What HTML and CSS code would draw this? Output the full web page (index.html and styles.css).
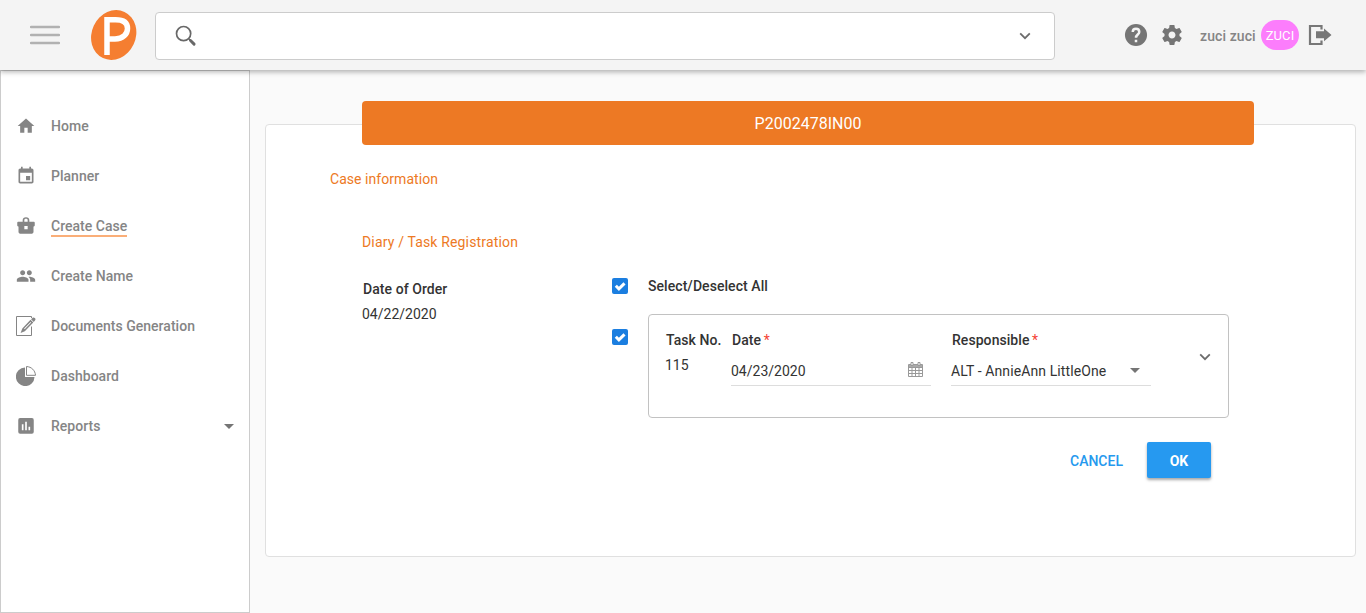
FILE: index.html
```html
<!DOCTYPE html>
<html lang="en">
<head>
<meta charset="utf-8">
<title>Diary / Task Registration</title>
<link rel="stylesheet" href="styles.css">
</head>
<body>
<header class="topbar">
  <svg class="menu" width="30" height="20" viewBox="0 0 30 20"><path d="M1 2h28M1 10h28M1 18h28" stroke="#b1b1b1" stroke-width="2.400" stroke-linecap="round"/></svg>
  <svg class="logo" width="48" height="52" viewBox="0 0 48 52"><ellipse cx="23.700" cy="26" rx="22" ry="25.500" transform="rotate(25 23.700 26)" fill="#f57e31"/><path d="M17 46V10.800h8.500C34 10.800 37.500 14 37.500 19.500S33 30 25 30h-8" fill="none" stroke="#fff" stroke-width="5.500"/></svg>
  <div class="search">
    <svg width="22" height="22" viewBox="0 0 22 22" fill="none" stroke="#686868"><circle cx="8.600" cy="8.600" r="7.100" stroke-width="1.700"/><path d="M14 14l1.500 1.500" stroke-width="1.700"/><path d="M15.500 15.500l3.600 3.600" stroke-width="2.900" stroke-linecap="round"/></svg>
    <svg width="12" height="8" viewBox="0 0 12 8" fill="none" stroke="#6c6c6c" stroke-width="1.800"><path d="M1.200 1.400L6 6.200l4.800-4.800"/></svg>
  </div>
  <div class="tools">
    <svg class="help" width="26" height="26" viewBox="0 0 24 24"><circle cx="12" cy="12" r="10.200" fill="#757575"/><path d="M9 9.200c0-1.800 1.300-3 3-3s3 1.200 3 3c0 2.300-3 2.500-3 5.300M12 16.300v2.300" fill="none" stroke="#f4f4f4" stroke-width="2.300"/></svg>
    <svg class="gear" width="24" height="24" viewBox="0 0 24 24" fill="#757575"><path d="M19.430 12.980c.04-.32.070-.64.070-.98s-.03-.66-.07-.98l2.110-1.650c.19-.15.240-.42.120-.64l-2-3.460c-.12-.22-.39-.3-.61-.22l-2.490 1c-.52-.4-1.080-.73-1.690-.98l-.38-2.650C14.460 2.180 14.250 2 14 2h-4c-.25 0-.46.180-.49.420l-.38 2.650c-.61.250-1.170.59-1.690.98l-2.490-1c-.23-.09-.49 0-.61.220l-2 3.460c-.13.220-.07.490.12.640l2.110 1.650c-.04.320-.07.650-.07.980s.03.660.07.980l-2.110 1.650c-.19.150-.24.420-.12.640l2 3.460c.12.220.39.300.61.220l2.490-1c.52.400 1.080.730 1.690.980l.38 2.650c.03.240.24.420.49.420h4c.25 0 .46-.18.490-.42l.38-2.650c.61-.25 1.170-.59 1.690-.98l2.490 1c.23.090.49 0 .61-.22l2-3.460c.12-.22.070-.49-.12-.64l-2.110-1.650zM12 15.500c-1.930 0-3.500-1.570-3.500-3.500s1.570-3.500 3.500-3.500 3.500 1.570 3.500 3.500-1.570 3.500-3.500 3.500z"/></svg>
    <span class="username">zuci zuci</span>
    <span class="avatar">ZUCI</span>
    <svg class="logout" width="24" height="22" viewBox="0 0 24 22"><path d="M13.500 5.500V2H2v18h11.500v-3.500" fill="none" stroke="#777" stroke-width="2.200"/><path d="M8 7.200h8V4.500l7.500 6.400L16 17.200v-3H8z" fill="#777"/></svg>
  </div>
</header>
<div class="page">
  <nav class="sidebar">
    <a class="item"><svg width="20" height="20" viewBox="0 0 24 24"><path d="M10 20v-6h4v6h5v-8h3L12 3 2 12h3v8z"/></svg><span>Home</span></a>
    <a class="item"><svg width="20" height="20" viewBox="0 0 24 24"><path d="M17 12h-5v5h5v-5zM16 1v2H8V1H6v2H5c-1.110 0-1.990.9-1.990 2L3 19c0 1.100.89 2 2 2h14c1.100 0 2-.9 2-2V5c0-1.100-.9-2-2-2h-1V1h-2zm3 18H5V8h14v11z"/></svg><span>Planner</span></a>
    <a class="item active"><svg width="20" height="20" viewBox="0 0 24 24"><path fill-rule="evenodd" d="M8 7V5c0-2 1.500-3.500 4-3.500S16 3 16 5v2h5.500c.6 0 1 .4 1 1v3.500c0 .6-.4 1-1 1H21V19c0 1.300-.8 2.200-2 2.200H5c-1.200 0-2-.9-2-2.200v-6.500h-.5c-.6 0-1-.4-1-1V8c0-.6.400-1 1-1zm2 0h4V5c0-1-.8-1.600-2-1.600S10 4 10 5zM10 12v4h4v-4z"/></svg><span>Create Case</span></a>
    <a class="item"><svg width="20" height="20" viewBox="0 0 24 24"><path d="M16 11c1.660 0 2.990-1.340 2.990-3S17.660 5 16 5s-3 1.340-3 3 1.340 3 3 3zm-8 0c1.660 0 2.990-1.340 2.990-3S9.660 5 8 5 5 6.340 5 8s1.340 3 3 3zm0 2c-2.330 0-7 1.170-7 3.500V19h14v-2.500c0-2.330-4.670-3.500-7-3.500zm8 0c-.29 0-.62.020-.97.050 1.160.84 1.970 1.970 1.970 3.450V19h6v-2.500c0-2.330-4.670-3.500-7-3.500z"/></svg><span>Create Name</span></a>
    <a class="item"><svg width="20" height="20" viewBox="0 0 20 20"><path d="M15.500 2V.5H.5v19h15v-9" fill="none" stroke="#858585"/><path fill-rule="evenodd" d="M15.100 3.200l1.300-1.300c.7-.7 1.700-.5 2.400.2.800.7 1 1.700.2 2.500l-1.300 1.300zM14.500 3.700l2.800 2.800-8.500 8.700-4.200 1.900 1.700-4.700zM14.600 5.900l-6.500 6.700.6.600 6.500-6.700z"/></svg><span>Documents Generation</span></a>
    <a class="item"><svg width="20" height="20" viewBox="0 0 20 20"><path d="M9 1.500V11h9.500A9.300 9.300 0 1 1 9 1.500z"/><path d="M10.500.5c5 .3 8.700 4 9 8.800h-9z" fill="#fff" stroke="#858585"/></svg><span>Dashboard</span></a>
    <a class="item"><svg width="20" height="20" viewBox="0 0 24 24"><path d="M19 2.500H5A2.300 2.300 0 0 0 2.700 5v14A2.300 2.300 0 0 0 5 21.400h14a2.300 2.300 0 0 0 2.300-2.400V5A2.300 2.300 0 0 0 19 2.500zM9 17H7v-7h2v7zm4 0h-2V7h2v10zm4 0h-2v-4h2v4z"/></svg><span>Reports</span><i class="caret"></i></a>
  </nav>
  <main class="content">
    <section class="card">
      <h1 class="banner">P2002478IN00</h1>
      <h2 class="case-title">Case information</h2>
      <h3 class="diary-title">Diary / Task Registration</h3>
      <div class="registration">
        <div class="order">
          <div class="label">Date of Order</div>
          <div class="value">04/22/2020</div>
        </div>
        <div class="tasks">
          <div class="row">
            <span class="check"><svg width="16" height="16" viewBox="0 0 16 16"><path d="M3.800 7.700l3.100 3.100 5.600-5.400" fill="none" stroke="#fff" stroke-width="3"/></svg></span>
            <span class="label select-all">Select/Deselect All</span>
          </div>
          <div class="row task-row">
            <span class="check"><svg width="16" height="16" viewBox="0 0 16 16"><path d="M3.800 7.700l3.100 3.100 5.600-5.400" fill="none" stroke="#fff" stroke-width="3"/></svg></span>
            <div class="task">
              <div class="number">
                <div class="label">Task No.</div>
                <div class="value">115</div>
              </div>
              <div class="field date">
                <div class="label">Date <b>*</b></div>
                <div class="input"><span>04/23/2020</span><svg width="15" height="15" viewBox="0 0 15 15" fill="none" stroke="#999"><path d="M.5 2.500h14v12H.5zM.5 5.500h14M.5 8.500h14M.5 11.500h14M4 5v9M7.500 5v9M11 5v9"/><path d="M1 3h13v2H1z" fill="#aaa" stroke="none"/><path d="M3 .5h2v3H3zM10 .5h2v3h-2z" fill="#fff"/></svg></div>
              </div>
              <div class="field responsible">
                <div class="label">Responsible <b>*</b></div>
                <div class="input"><span>ALT - AnnieAnn LittleOne</span><i class="caret"></i></div>
              </div>
              <svg class="expand" width="12" height="8" viewBox="0 0 12 8" fill="none" stroke="#6c6c6c" stroke-width="1.800"><path d="M1.200 1.400L6 6.200l4.800-4.800"/></svg>
            </div>
          </div>
          <div class="actions"><button class="cancel">CANCEL</button><button class="ok">OK</button></div>
        </div>
      </div>
    </section>
  </main>
</div>
</body>
</html>
```
FILE: styles.css
```css
* { box-sizing: border-box; }
body { margin: 0; height: 613px; overflow: hidden; background: #fafafa; color: #333; font: 14px/20px Roboto, sans-serif; display: flex; flex-direction: column; }
svg { display: block; flex: none; }
h1, h2, h3 { margin: 0; font-weight: 400; }
.topbar { position: relative; z-index: 1; flex: none; height: 70px; background: #f4f4f4; box-shadow: 0 2px 5px rgba(0, 0, 0, .3); display: flex; align-items: center; padding: 0 34px 0 30px; }
.logo { margin-left: 30px; }
.search { width: 900px; height: 48px; margin: 1px 0 0 17px; padding: 0 23px 0 19px; border: 1px solid #ccc; border-radius: 4px; background: #fff; display: flex; align-items: center; justify-content: space-between; }
.tools { display: flex; align-items: center; margin-left: 68px; }
.help { margin-bottom: 1px; }
.gear { margin-left: 11px; }
.username { width: 56px; margin: 2px 5px 0 16px; color: #858585; font-weight: 500; letter-spacing: .1px; white-space: nowrap; }
.avatar { width: 38px; height: 30px; border-radius: 15px; background: #fc7dfc; color: #fff; font-size: 13px; line-height: 31px; text-align: center; letter-spacing: .1px; }
.logout { margin-left: 9px; }
.page { flex: 1; min-height: 0; display: flex; }
.sidebar { width: 250px; border: 1px solid #ccc; background: #fff; padding-top: 30px; }
.item { height: 50px; padding: 0 15px; display: flex; align-items: center; color: #858585; font-weight: 500; letter-spacing: .02px; }
.item svg { fill: #858585; margin-right: 15px; }
.active span { height: 21px; border-bottom: 2px solid #faae78; margin-top: 1px; }
.caret { border: solid transparent; border-width: 5px 5px 0; border-top-color: #757575; margin-left: auto; }
.content { flex: 1; padding: 54px 10px 0 15px; }
.card { height: 433px; border: 1px solid #e0e0e0; border-radius: 4px; background: #fff; }
.banner { width: 892px; height: 44px; margin: -24px 0 0 96px; border-radius: 4px; background: #ed7924; color: #fff; font-size: 16px; line-height: 46px; text-align: center; }
.case-title { margin: 24px 0 0 64px; color: #ed7924; font-size: 14px; letter-spacing: .05px; }
.diary-title { margin: 43px 0 0 96px; color: #ed7924; font-size: 14px; letter-spacing: .16px; }
.registration { display: flex; padding: 24px 0 0 96px; }
.order { width: 250px; padding-top: 3px; }
.label { font-weight: 500; padding-left: 1px; letter-spacing: .06px; }
.label b { color: #f44336; font-weight: 400; margin-left: -1px; }
.value { margin-top: 5px; }
.tasks { width: 617px; }
.row { display: flex; align-items: center; }
.check { flex: none; width: 16px; height: 16px; border-radius: 2px; background: #1b7ee0; }
.select-all { padding-left: 20px; }
.task-row { margin-top: 18px; align-items: flex-start; }
.task-row .check { margin-top: 15px; }
.task { width: 581px; height: 104px; margin-left: 20px; padding: 15px 0 0 16px; border: 1px solid #c2c2c2; border-radius: 4px; display: flex; }
.number { width: 66px; white-space: nowrap; }
.field { width: 200px; margin-right: 20px; }
.input { display: flex; align-items: center; height: 30px; margin-top: 6px; border-bottom: 1px solid #ddd; white-space: nowrap; }
.responsible .input { letter-spacing: .1px; }
.input svg { margin: 0 8px 2px auto; }
.input .caret { margin-right: 11px; }
.expand { margin: 23px 0 0 28px; }
.actions { display: flex; justify-content: flex-end; padding: 24px 18px 0 0; }
button { font: 500 14px/36px Roboto, sans-serif; height: 36px; padding: 0; border: 0; border-radius: 2px; }
.cancel { width: 53px; margin: 1px 24px 0 0; background: none; color: #2699ee; }
.ok { width: 64px; background: #2699f0; color: #fff; font-weight: 700; line-height: 38px; box-shadow: 0 2px 3px rgba(0, 0, 0, .35); }
```
